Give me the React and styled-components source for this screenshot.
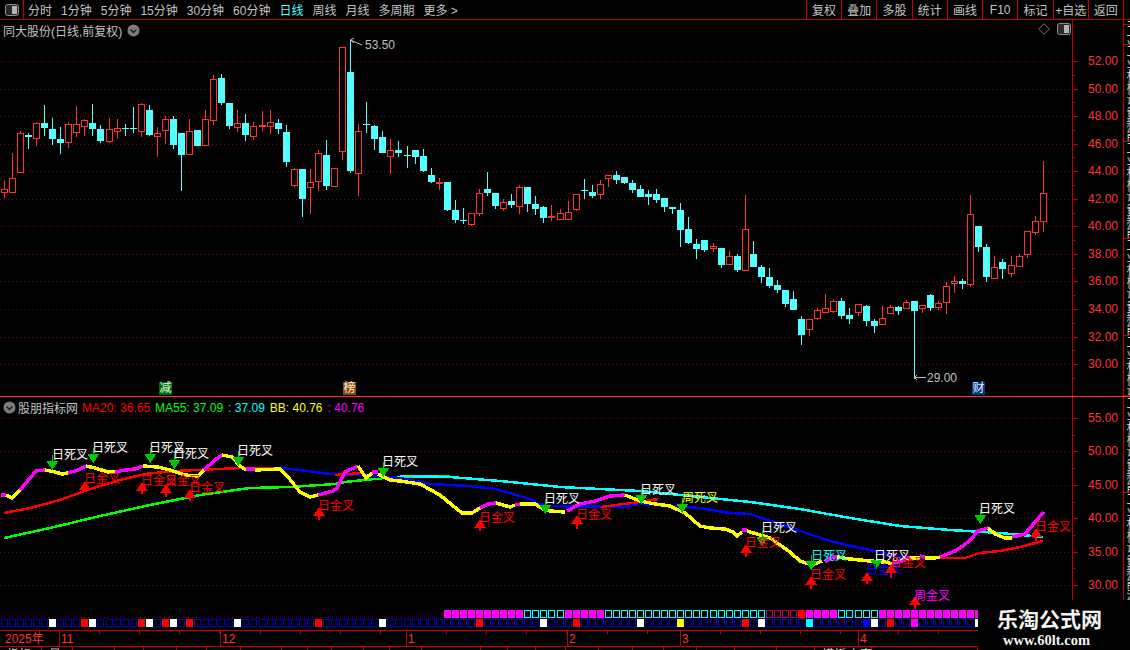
import styled, { createGlobalStyle } from 'styled-components';

const RED = '#ff3232';
const LINE_RED = '#c00000';
const CYAN = '#54ffff';
const FONT = '"Liberation Sans", "Noto Sans CJK SC", sans-serif';

const GlobalStyle = createGlobalStyle`
  html, body {
    margin: 0;
    background: #000;
  }
  body {
    font-family: ${FONT};
    font-size: 12px;
    overflow: hidden;
  }
`;

const Page = styled.div`
  position: relative;
  width: 1130px;
  height: 650px;
  display: flex;
  flex-direction: column;
  overflow: hidden;
  background: #000;
`;

const Toolbar = styled.div`
  height: 20px;
  box-sizing: border-box;
  display: flex;
  justify-content: space-between;
  border-bottom: 1px solid ${LINE_RED};
  padding-right: 6px;
`;

const ToolbarLeft = styled.div`
  display: flex;
  align-items: center;
`;

const ToggleCell = styled.div`
  width: 23px;
  height: 19px;
  display: flex;
  align-items: center;
  justify-content: center;
  border-right: 1px solid ${LINE_RED};
  margin-right: 4px;
`;

const Periods = styled.div`
  display: flex;
  align-items: center;
  gap: 9px;
`;

const Period = styled.span`
  color: ${(p) => (p.$active ? CYAN : '#c4c4c4')};
  white-space: pre;
`;

const ToolbarRight = styled.div`
  width: 317px;
  display: flex;
  border-right: 1px solid ${LINE_RED};
`;

const ToolButton = styled.div`
  flex: 1;
  height: 19px;
  display: flex;
  align-items: center;
  justify-content: center;
  border-left: 1px solid ${LINE_RED};
  color: #c4c4c4;
  white-space: nowrap;
`;

const Pane = styled.div`
  position: relative;
  height: ${(p) => p.$height}px;
  box-sizing: border-box;
  display: flex;
  border-bottom: ${(p) => (p.$ruled ? `1px solid ${RED}` : 'none')};
`;

const ChartSvg = styled.svg`
  display: block;
  flex: none;
  width: 1123px;
  height: 100%;
`;

const SideStrip = styled.div`
  flex: 1;
  display: flex;
  flex-direction: column;
  border-left: 1px solid ${LINE_RED};
  overflow: hidden;
`;

const SideCell = styled.div`
  flex: ${(p) => (p.$height ? `none` : 1)};
  height: ${(p) => (p.$height ? `${p.$height}px` : 'auto')};
  box-sizing: border-box;
  border-bottom: 1px solid ${LINE_RED};
  overflow: hidden;
`;

// only the left edge of this column of text shows, the rest is cut by the strip
const SideText = styled.div`
  width: 12px;
  height: 100%;
  margin-left: 1px;
  color: #d0d0d0;
  line-height: 12px;
  writing-mode: vertical-rl;
  white-space: nowrap;
`;

const PaneTitle = styled.div`
  position: absolute;
  left: ${(p) => p.$left}px;
  top: ${(p) => p.$top}px;
  display: flex;
  align-items: center;
  gap: ${(p) => p.$gap}px;
  color: #c4c4c4;
  white-space: nowrap;
`;

const Reading = styled.span`
  color: ${(p) => p.$color};
  margin-right: ${(p) => p.$after || 0}px;
`;

const CornerTools = styled.div`
  position: absolute;
  left: 1038px;
  top: 3px;
  display: flex;
  align-items: center;
  gap: 7px;
`;

const TimeAxis = styled.div`
  height: 17px;
  box-sizing: border-box;
  width: 978px;
  display: flex;
  border-top: 1px solid ${LINE_RED};
  border-bottom: 1px solid ${LINE_RED};
`;

const TimeCell = styled.div`
  width: ${(p) => p.$width}px;
  box-sizing: border-box;
  border-left: ${(p) => (p.$first ? 'none' : `1px solid ${LINE_RED}`)};
  padding-left: ${(p) => (p.$first ? 5 : 1)}px;
  color: ${RED};
  line-height: 16px;
  background: repeating-linear-gradient(90deg, transparent 0 39px, ${LINE_RED} 39px 40px) top left / 100% 3px no-repeat;
`;

const BottomTabs = styled.div`
  height: 3px;
  width: 978px;
  display: flex;
  overflow: hidden;
`;

const BottomTab = styled.div`
  width: ${(p) => p.$width}px;
  box-sizing: border-box;
  border-right: 1px solid ${LINE_RED};
  padding-left: 7px;
  color: #d0d0d0;
  line-height: 16px;
  white-space: nowrap;
`;

const Watermark = styled.div`
  position: absolute;
  left: 978px;
  top: 600px;
  width: 152px;
  height: 50px;
  background: #000;
  display: flex;
  flex-direction: column;
  align-items: center;
  padding-top: 6px;
  box-sizing: border-box;
  color: #f2f2f2;
`;

const WatermarkName = styled.div`
  font-family: "Noto Sans CJK SC", sans-serif;
  font-weight: 700;
  font-size: 21px;
  line-height: 24px;
  margin-left: -9px;
`;

const WatermarkUrl = styled.div`
  font-family: "Liberation Serif", serif;
  font-weight: 700;
  font-size: 14.5px;
  line-height: 16px;
  margin: 2px 0 0 -15px;
`;

const ChartText = styled.text`
  font-family: ${FONT};
  font-size: 12px;
  fill: ${(p) => p.$color};
  dominant-baseline: central;
`;

const GridLine = styled.line`
  stroke: #7c0000;
  stroke-width: 1;
  stroke-dasharray: 1 3;
  shape-rendering: crispEdges;
`;

const AxisLine = styled.line`
  stroke: ${LINE_RED};
  stroke-width: 1;
  shape-rendering: crispEdges;
`;

const Curve = styled.polyline`
  fill: none;
  stroke: ${(p) => p.$color};
  stroke-width: ${(p) => p.$width};
  stroke-linejoin: round;
  shape-rendering: crispEdges;
`;

// candles read off the picture as zoomed rows: [red, bodyTop, bodyBottom, wickTop, wickBottom], y = base + v / 3
const CANDLE_ROWS = [
  [60, [
    [1,388,395,360,413],[1,355,395,280,395],[1,220,335,213,335],[0,225,231,220,267],[1,190,233,186,258],
    [0,189,204,135,228],[0,207,237,174,255],[0,237,249,201,282],[1,193,245,186,264],[1,193,215,138,231],
    [1,181,197,177,228],[0,189,207,132,228],[0,207,243,195,249],[1,208,242,174,249],[1,205,212,177,237],
    [0,204,206,192,228],[0,204,206,141,219],[1,133,212,129,231],[0,150,225,135,228],[1,220,227,201,291],
    [1,178,209,168,252],[0,177,255,168,267],[0,219,285,219,393],[1,214,281,177,281],[0,210,258,210,258],
    [1,178,254,150,254],[1,58,179,45,195],[0,54,129,42,135],[0,129,198,129,207],[1,190,200,150,216],
    [0,189,225,162,243],[1,199,227,186,240],[1,196,199,153,213],[1,187,197,150,222],[0,189,207,177,222],
    [0,216,306,195,321],[1,328,374,324,381],[0,327,417,327,471],[1,367,380,327,462],[1,280,362,270,393],
    [0,285,378,240,390],[1,325,377,325,381],[1,-39,272,-39,300],[0,36,333,-60,339],[1,214,338,192,408],
    [0,192,194,126,219],[0,198,237,195,270],[0,231,279,213,279],[1,271,287,237,342],[0,270,278,243,291],
  ]],
  [160, [
    [0,-15,-12,-42,24],[0,-30,-9,-30,12],[0,-12,33,-33,36],[0,45,66,24,69],[1,66,69,54,90],
    [0,66,150,66,153],[0,150,180,120,189],[0,180,183,144,192],[1,160,191,160,197],[1,100,158,87,168],
    [0,87,99,36,108],[0,99,138,99,147],[1,127,143,117,153],[0,123,135,102,144],[1,82,137,75,162],
    [0,81,132,81,156],[0,132,147,108,165],[0,141,174,138,189],[1,167,170,135,183],[1,160,177,147,180],
    [1,157,176,123,176],[1,103,146,103,153],[0,90,92,57,117],[0,96,108,75,114],[1,73,101,60,117],
    [1,46,55,46,81],[0,45,60,33,72],[0,51,69,51,72],[0,69,90,60,99],[0,87,111,75,111],
    [0,102,111,90,135],[0,102,120,87,129],[0,114,141,114,156],[0,141,147,141,162],[0,150,210,129,261],
    [0,207,249,171,252],[0,252,267,237,297],[0,240,270,240,276],[1,258,263,249,276],[0,264,315,264,324],
    [1,289,311,273,311],[0,288,330,282,336],[1,208,329,105,329],[0,282,321,243,321],[0,321,351,315,369],
    [0,351,378,324,384],
    [0,375,390,360,399],[0,390,432,390,441],[0,417,450,393,450],
  ]],
  [180, [
    [0,417,465,408,495],[1,418,448,418,468],[1,391,415,385,421],[1,384,395,342,400],[1,364,394,358,400],
    [0,364,408,354,417],[0,405,416,384,432],[1,373,397,373,409],[0,378,423,375,438],[0,423,438,417,459],
    [1,415,433,378,433],[1,382,398,375,400],[0,381,392,378,405],[1,367,385,360,385],[0,364,393,364,591],
    [1,376,385,376,399],[0,345,384,342,393],[1,370,380,364,390],[1,319,367,307,402],[1,304,310,288,339],
    [0,303,312,297,327],[1,103,311,45,321],[0,138,201,138,216],[0,201,291,192,306],[1,262,293,228,297],
    [0,246,267,237,297],[1,256,278,228,291],[1,229,257,222,260],[1,154,223,154,234],[1,124,157,108,165],
    [1,40,124,-57,156],
  ]],
];

const candleX = (i) => Math.floor(4.3 + 8.054 * i);

const candles = CANDLE_ROWS.flatMap(([base, rows]) =>
  rows.map(([red, bt, bb, wt, wb]) => ({
    red: !!red,
    top: Math.round(base + bt / 3),
    bottom: Math.round(base + bb / 3),
    high: Math.round(base + wt / 3),
    low: Math.round(base + wb / 3),
  }))
);

function Candle({ c, i }) {
  const x = candleX(i);
  const colour = c.red ? RED : CYAN;
  const height = Math.max(c.bottom - c.top, 1);
  return (
    <g shapeRendering="crispEdges">
      <rect x={x} y={c.high} width={1} height={Math.max(c.low - c.high, 1)} fill={colour} />
      {c.red ? (
        <rect x={x - 2.5} y={c.top + 0.5} width={6} height={height} fill="#000" stroke={colour} />
      ) : (
        <rect x={x - 3} y={c.top} width={7} height={height} fill={colour} />
      )}
    </g>
  );
}

const UPPER_PRICES = ['52.00', '50.00', '48.00', '46.00', '44.00', '42.00', '40.00', '38.00', '36.00', '34.00', '32.00', '30.00'];
const LOWER_PRICES = ['55.00', '50.00', '45.00', '40.00', '35.00', '30.00'];

function Axis({ labels, start, step, top, bottom, extraGrid = [] }) {
  const ys = labels.map((_, i) => Math.round(start + step * i));
  const minor = labels.map((_, i) => Math.round(start + step * (i + 0.5)));
  return (
    <g>
      {ys.concat(extraGrid).map((y) => (
        <GridLine key={y} x1={0} x2={1072} y1={y + 0.5} y2={y + 0.5} />
      ))}
      <AxisLine x1={1072.5} x2={1072.5} y1={top} y2={bottom} />
      {ys.map((y) => (
        <AxisLine key={y} x1={1072} x2={1078} y1={y + 0.5} y2={y + 0.5} />
      ))}
      {minor.map((y) => (
        <AxisLine key={y} x1={1072} x2={1075} y1={y + 0.5} y2={y + 0.5} />
      ))}
      {labels.map((text, i) => (
        <ChartText key={text} x={1088} y={ys[i]} $color={RED}>{text}</ChartText>
      ))}
    </g>
  );
}

const FLAGS = [
  { x: 159, text: '减', bg: '#006a10', color: '#d8ffd8' },
  { x: 343, text: '榜', bg: '#8a4a14', color: '#fff0dc' },
  { x: 972, text: '财', bg: '#003c84', color: '#e8f0ff' },
];

const MAIN_LINE = [
  ['m', [[1,495],[6,495]]],
  ['y', [[6,495],[12,498],[20,490]]],
  ['m', [[20,490],[30,478],[36,471],[45,470]]],
  ['y', [[45,470],[55,472],[62,474],[68,473]]],
  ['m', [[68,473],[78,470],[86,466]]],
  ['y', [[86,466],[95,468],[108,472],[115,472]]],
  ['m', [[115,472],[125,470],[135,469],[143,466]]],
  ['y', [[143,466],[158,467],[170,470],[185,475],[198,476],[204,470]]],
  ['m', [[204,470],[215,460],[222,455]]],
  ['y', [[222,455],[232,457],[240,466],[246,470]]],
  ['m', [[246,469],[255,469]]],
  ['y', [[255,470],[280,469],[288,477],[300,492],[310,497],[318,495]]],
  ['m', [[318,495],[333,491],[337,488],[345,472],[358,466]]],
  ['y', [[358,466],[366,478],[372,473]]],
  ['m', [[372,472],[378,472]]],
  ['y', [[378,474],[390,480],[400,481],[420,484],[440,495],[452,505],[462,513],[472,513],[480,508]]],
  ['m', [[480,508],[488,504],[496,503]]],
  ['y', [[496,503],[510,507],[515,505]]],
  ['m', [[515,505],[520,504]]],
  ['y', [[520,504],[535,504],[545,510],[550,511],[565,512]]],
  ['m', [[567,511],[580,504],[595,501],[610,496],[625,495]]],
  ['y', [[625,495],[640,501],[655,504],[670,506],[685,513],[700,526],[710,528],[725,529],[733,532],[737,536],[742,532]]],
  ['m', [[742,530],[747,530]]],
  ['y', [[747,531],[770,538],[790,552],[800,561],[812,565],[822,561]]],
  ['m', [[825,562],[832,557],[837,557]]],
  ['y', [[837,557],[850,559],[870,561],[885,562],[893,564]]],
  ['m', [[893,564],[905,560],[910,557]]],
  ['y', [[910,558],[920,558]]],
  ['m', [[920,556],[925,557]]],
  ['y', [[925,558],[935,558],[940,557]]],
  ['m', [[940,557],[955,551],[963,546],[970,540],[978,531],[988,528]]],
  ['y', [[988,528],[995,534],[1005,538],[1012,538]]],
  ['m', [[1012,537],[1025,534],[1035,522],[1044,512]]],
];

const GREEN_LINE = [[4,538],[50,528],[100,516],[150,505],[200,495],[250,488],[290,487],[335,484],[345,482],[395,477],[450,476]];
const CYAN_LINE = [[400,476],[450,477],[500,481],[560,487],[640,491],[700,497],[750,502],[800,509],[850,518],[900,526],[950,530],[1000,533],[1043,537]];
const BLUE_LINES = [
  [[176,471],[183,471]],
  [[228,469],[233,469]],
  [[280,468],[300,470],[330,474],[360,475],[400,478],[430,484],[470,486],[495,489],[530,499],[545,506],[620,507],[640,504],[700,508],[730,513],[750,514],[800,531],[830,541],[860,548],[880,552],[900,557],[940,558]],
];
const RED_LINES = [
  [[4,513],[30,508],[60,500],[90,489],[120,480],[145,474],[175,471],[240,468],[276,468]],
  [[335,475],[362,473]],
  [[601,507],[640,502],[658,499]],
  [[940,558],[965,558],[980,553],[1000,551],[1020,547],[1043,541]],
];

const pts = (list) => list.map((p) => p.join(',')).join(' ');

const DEAD_MARKS = [
  { x: 52, tip: 469, tx: 52, ty: 455, label: '日死叉', color: '#fff' },
  { x: 93, tip: 462, tx: 92, ty: 448, label: '日死叉', color: '#fff' },
  { x: 150, tip: 462, tx: 149, ty: 448, label: '日死叉', color: '#fff' },
  { x: 174, tip: 468, tx: 173, ty: 454, label: '日死叉', color: '#fff' },
  { x: 238, tip: 465, tx: 237, ty: 451, label: '日死叉', color: '#fff' },
  { x: 383, tip: 476, tx: 382, ty: 462, label: '日死叉', color: '#fff' },
  { x: 545, tip: 513, tx: 544, ty: 499, label: '日死叉', color: '#fff' },
  { x: 641, tip: 503, tx: 640, ty: 490, label: '日死叉', color: '#fff' },
  { x: 682, tip: 512, tx: 682, ty: 498, label: '周死叉', color: '#ffff00' },
  { x: 762, tip: 545, tx: 761, ty: 528, label: '日死叉', color: '#fff' },
  { x: 811, tip: 569, tx: 811, ty: 556, label: '日死叉', color: '#00ffff' },
  { x: 876, tip: 568, tx: 874, ty: 556, label: '日死叉', color: '#fff' },
  { x: 980, tip: 523, tx: 979, ty: 509, label: '日死叉', color: '#fff' },
];

const GOLD_MARKS = [
  { x: 85, tip: 482, end: 491, ty: 479, label: '日金叉', color: '#ff0000' },
  { x: 142, tip: 483, end: 494, ty: 481, label: '日金叉', color: '#ff0000' },
  { x: 166, tip: 485, end: 497, ty: 481, label: '日金叉', color: '#ff0000' },
  { x: 190, tip: 490, end: 501, ty: 488, label: '日金叉', color: '#ff0000' },
  { x: 319, tip: 508, end: 520, ty: 506, label: '日金叉', color: '#ff0000' },
  { x: 480, tip: 520, end: 531, ty: 518, label: '日金叉', color: '#ff0000' },
  { x: 577, tip: 516, end: 529, ty: 515, label: '日金叉', color: '#ff0000' },
  { x: 746, tip: 545, end: 557, ty: 543, label: '日金叉', color: '#ff0000' },
  { x: 811, tip: 577, end: 589, ty: 575, label: '日金叉', color: '#ff0000' },
  { x: 867, tip: 573, end: 584, ty: 570, label: '日金叉', color: '#0000ff' },
  { x: 891, tip: 565, end: 578, ty: 563, label: '日金叉', color: '#ff0000' },
  { x: 915, tip: 597, end: 609, ty: 596, label: '周金叉', color: '#ff00ff' },
  { x: 1036, tip: 529, end: 541, ty: 527, label: '日金叉', color: '#ff0000' },
];

function DeadMark({ m }) {
  return (
    <g>
      <g shapeRendering="crispEdges">
        <rect x={m.x} y={m.tip - 14} width={1} height={8} fill="#00c800" />
        <polygon points={`${m.x - 5.5},${m.tip - 8} ${m.x + 6.5},${m.tip - 8} ${m.x + 0.5},${m.tip + 1}`} fill="#00c800" />
      </g>
      <ChartText x={m.tx} y={m.ty} $color={m.color}>{m.label}</ChartText>
    </g>
  );
}

function GoldMark({ m }) {
  return (
    <g>
      <g shapeRendering="crispEdges">
        <rect x={m.x - 1} y={m.tip + 5} width={2} height={m.end - m.tip - 5} fill="#ff0000" />
        <polygon points={`${m.x - 6},${m.tip + 8} ${m.x + 6},${m.tip + 8} ${m.x},${m.tip - 1}`} fill="#ff0000" />
      </g>
      <ChartText x={m.x - 1} y={m.ty} $color={m.color}>{m.label}</ChartText>
    </g>
  );
}

// top signal row: [first index, last index, colour, hollow]
const TOP_SIGNALS = [
  [55, 64, '#ff00ff', false],
  [65, 69, '#00ffff', true],
  [70, 74, '#ff00ff', false],
  [75, 94, '#00ffff', true],
  [95, 98, '#b0005a', true],
  [99, 99, '#ff0000', false],
  [100, 103, '#ff00ff', false],
  [104, 108, '#00ffff', true],
  [109, 121, '#ff00ff', false],
];

const BOTTOM_FILLED = {
  6: '#fff', 10: '#f00', 11: '#fff', 17: '#f00', 18: '#fff', 20: '#f00', 21: '#fff', 23: '#f00',
  29: '#fff', 39: '#f00', 47: '#fff', 59: '#f00', 67: '#fff', 71: '#f00', 79: '#fff', 84: '#ff0',
  92: '#f00', 94: '#fff', 100: '#0ff', 107: '#00f', 108: '#fff', 110: '#f00', 113: '#f0f', 121: '#fff',
};

function SignalSquare({ i, y, color, hollow }) {
  const x = candleX(i);
  if (hollow) {
    return <rect x={x - 2.5} y={y + 0.5} width={6} height={7} fill="none" stroke={color} />;
  }
  return <rect x={x - 3} y={y} width={7} height={8} fill={color} />;
}

function SignalRows() {
  const top = TOP_SIGNALS.flatMap(([from, to, color, hollow]) =>
    Array.from({ length: to - from + 1 }, (_, k) => (
      <SignalSquare key={`t${from + k}`} i={from + k} y={610} color={color} hollow={hollow} />
    ))
  );
  const bottom = Array.from({ length: 122 }, (_, i) => (
    <SignalSquare
      key={`b${i}`}
      i={i}
      y={619}
      color={BOTTOM_FILLED[i] || '#0000c0'}
      hollow={!BOTTOM_FILLED[i]}
    />
  ));
  return <g shapeRendering="crispEdges">{top}{bottom}</g>;
}

function PaneToggleIcon() {
  return (
    <svg width="14" height="12" viewBox="0 0 14 12">
      <rect x="0.5" y="0.5" width="13" height="11" rx="2" fill="#2a2a2a" stroke="#8c8c8c" />
      <rect x="7" y="2" width="5" height="8" fill="#b4b4b4" />
    </svg>
  );
}

function DropIcon() {
  return (
    <svg width="13" height="13" viewBox="0 0 13 13">
      <circle cx="6.5" cy="6.5" r="6" fill="#7c7c7c" />
      <path d="M3.5 5.5 L6.5 8.5 L9.5 5.5" fill="none" stroke="#1c1c1c" strokeWidth="1.4" />
    </svg>
  );
}

function DiamondIcon() {
  return (
    <svg width="12" height="12" viewBox="0 0 12 12">
      <path d="M6 0.7 L11.3 6 L6 11.3 L0.7 6 Z" fill="none" stroke="#7c7c7c" />
    </svg>
  );
}

const PERIODS = ['分时', '1分钟', '5分钟', '15分钟', '30分钟', '60分钟', '日线', '周线', '月线', '多周期', '更多 >'];
const TOOLS = ['复权', '叠加', '多股', '统计', '画线', 'F10', '标记', '+自选', '返回'];
const TIME_CELLS = [
  { width: 59, label: '2025年' },
  { width: 161, label: '11' },
  { width: 186, label: '12' },
  { width: 161, label: '1' },
  { width: 113, label: '2' },
  { width: 178, label: '3' },
  { width: 120, label: '4' },
];
const TAB_WIDTHS = [42, 31, 42, 29, 33, 30, 34, 41, 26, 24, 32, 26, 32, 59, 27, 28, 30, 33, 34, 31, 33, 38, 42, 38, 26, 31, 106];
const TAB_TEXT = { 0: '指标', 1: '量', 24: '模板', 25: '自定' };
const SIDE_TEXT = '工业机械设备新能源汽车电子元件通信设备化工原料基础建设';

const UPPER_SIDE_CELLS = [5, 20, 97, 97, 97, 0];
const LOWER_SIDE_CELLS = [96, 0];

function Side({ cells }) {
  return (
    <SideStrip>
      {cells.map((h, i) => (
        <SideCell key={i} $height={h}>
          <SideText>{SIDE_TEXT}</SideText>
        </SideCell>
      ))}
    </SideStrip>
  );
}

export default function App() {
  return (
    <Page>
      <GlobalStyle />
      <Toolbar>
        <ToolbarLeft>
          <ToggleCell><PaneToggleIcon /></ToggleCell>
          <Periods>
            {PERIODS.map((p) => (
              <Period key={p} $active={p === '日线'}>{p}</Period>
            ))}
          </Periods>
        </ToolbarLeft>
        <ToolbarRight>
          {TOOLS.map((t) => (
            <ToolButton key={t}>{t}</ToolButton>
          ))}
        </ToolbarRight>
      </Toolbar>

      <Pane $height={377} $ruled>
        <ChartSvg viewBox="0 20 1123 376">
          <Axis labels={UPPER_PRICES} start={61} step={27.55} top={20} bottom={396} />
          {candles.map((c, i) => (
            <Candle key={i} c={c} i={i} />
          ))}
          <path d="M350.5 40 L362 45 M350.5 40 L354 38 M350.5 40 L354 43" fill="none" stroke="#c0c0c0" />
          <ChartText x={365} y={45} $color="#c0c0c0">53.50</ChartText>
          <path d="M914 377.5 L926 377.5 M914 377.5 L917 375 M914 377.5 L917 380" fill="none" stroke="#c0c0c0" shapeRendering="crispEdges" />
          <ChartText x={927} y={378} $color="#c0c0c0">29.00</ChartText>
          {FLAGS.map((f) => (
            <g key={f.text}>
              <rect x={f.x} y={382} width={13} height={13} fill={f.bg} />
              <ChartText x={f.x + 0.5} y={388} $color={f.color}>{f.text}</ChartText>
            </g>
          ))}
        </ChartSvg>
        <Side cells={UPPER_SIDE_CELLS} />
        <PaneTitle $left={3} $top={2} $gap={5}>
          同大股份(日线,前复权)
          <DropIcon />
        </PaneTitle>
        <CornerTools>
          <DiamondIcon />
          <PaneToggleIcon />
        </CornerTools>
      </Pane>

      <Pane $height={233}>
        <ChartSvg viewBox="0 397 1123 233">
          <Axis labels={LOWER_PRICES} start={418} step={33.4} top={397} bottom={630} extraGrid={[617]} />
          <Curve points={pts(GREEN_LINE)} $color="#00ff00" $width={2.5} />
          <Curve points={pts(CYAN_LINE)} $color="#00ffff" $width={2.5} />
          {BLUE_LINES.map((l, i) => (
            <Curve key={i} points={pts(l)} $color="#0000ff" $width={2.5} />
          ))}
          {RED_LINES.map((l, i) => (
            <Curve key={i} points={pts(l)} $color="#ff0000" $width={2.5} />
          ))}
          {MAIN_LINE.map(([tone, l], i) => (
            <Curve key={i} points={pts(l)} $color={tone === 'm' ? '#ff00ff' : '#ffff00'} $width={3.5} />
          ))}
          <SignalRows />
          {DEAD_MARKS.map((m, i) => (
            <DeadMark key={i} m={m} />
          ))}
          {GOLD_MARKS.map((m, i) => (
            <GoldMark key={i} m={m} />
          ))}
        </ChartSvg>
        <Side cells={LOWER_SIDE_CELLS} />
        <PaneTitle $left={3} $top={2} $gap={2}>
          <DropIcon />
          <Reading $color="#c4c4c4" $after={2}>股朋指标网</Reading>
          <Reading $color="#ff0000" $after={3}>MA20: 36.65</Reading>
          <Reading $color="#00ff00" $after={3}>MA55: 37.09</Reading>
          <Reading $color="#00ffff" $after={3}>: 37.09</Reading>
          <Reading $color="#ffff00" $after={3}>BB: 40.76</Reading>
          <Reading $color="#ff00ff">: 40.76</Reading>
        </PaneTitle>
      </Pane>

      <TimeAxis>
        {TIME_CELLS.map((c, i) => (
          <TimeCell key={c.label} $width={c.width} $first={i === 0}>{c.label}</TimeCell>
        ))}
      </TimeAxis>
      <BottomTabs>
        {TAB_WIDTHS.map((w, i) => (
          <BottomTab key={i} $width={w}>{TAB_TEXT[i] || ''}</BottomTab>
        ))}
      </BottomTabs>

      <Watermark>
        <WatermarkName>乐淘公式网</WatermarkName>
        <WatermarkUrl>www.60lt.com</WatermarkUrl>
      </Watermark>
    </Page>
  );
}
